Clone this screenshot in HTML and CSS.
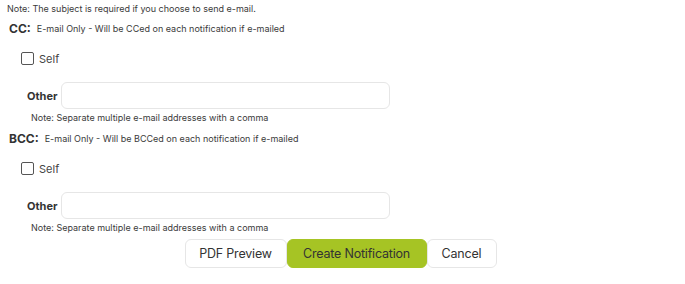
FILE: index.html
```html
<!DOCTYPE html>
<html lang="en">
<head>
    <meta charset="UTF-8">
    <meta name="viewport" content="width=device-width, initial-scale=1.0">
    <title>Notification Recipients</title>
    <link rel="stylesheet" href="styles.css">
</head>
<body>
    <div class="form">
        <div class="note-top">Note: The subject is required if you choose to send e-mail.</div>

        <div class="section-head">
            <span class="head-label">CC:</span>
            <span class="head-desc">E-mail Only - Will be CCed on each notification if e-mailed</span>
        </div>
        <label class="self-row">
            <span class="box"></span>
            <span>Self</span>
        </label>
        <div class="other-row">
            <span class="other-label">Other</span>
            <input class="other-input" type="text">
        </div>
        <div class="field-note">Note: Separate multiple e-mail addresses with a comma</div>

        <div class="section-head bcc">
            <span class="head-label">BCC:</span>
            <span class="head-desc">E-mail Only - Will be BCCed on each notification if e-mailed</span>
        </div>
        <label class="self-row">
            <span class="box"></span>
            <span>Self</span>
        </label>
        <div class="other-row">
            <span class="other-label">Other</span>
            <input class="other-input" type="text">
        </div>
        <div class="field-note">Note: Separate multiple e-mail addresses with a comma</div>

        <div class="actions">
            <button class="btn btn-preview">PDF Preview</button>
            <button class="btn btn-create">Create Notification</button>
            <button class="btn btn-cancel">Cancel</button>
        </div>
    </div>
</body>
</html>
```

FILE: styles.css
```css
* {
    margin: 0;
    padding: 0;
    box-sizing: border-box;
}

body {
    font-family: 'Inter', sans-serif;
    color: #333;
    background: #fff;
}

.form {
    padding-left: 7px;
    width: 685px;
}

.note-top {
    margin-top: 3px;
    font-size: 9px;
    line-height: 12px;
    color: #3a3a3a;
}

.section-head {
    display: flex;
    align-items: center;
    height: 16px;
    margin-top: 5px;
    padding-left: 2px;
}

.section-head.bcc {
    margin-top: 6px;
}

.head-label {
    font-size: 12px;
    font-weight: 700;
    margin-right: 6px;
    color: #333;
}

.head-desc {
    font-size: 9px;
    color: #3a3a3a;
}

.self-row {
    display: flex;
    align-items: center;
    height: 13px;
    margin-top: 16px;
    padding-left: 14px;
    gap: 5px;
    font-size: 11px;
    color: #444;
}

.box {
    width: 13px;
    height: 13px;
    border: 1px solid #555;
    border-radius: 2px;
    background: #fff;
}

.other-row {
    display: flex;
    align-items: center;
    margin-top: 17px;
    padding-left: 20px;
}

.other-label {
    width: 34px;
    font-size: 11px;
    font-weight: 700;
    color: #333;
}

.other-input {
    width: 329px;
    height: 27px;
    border: 1px solid #e6e6e6;
    border-radius: 6px;
    outline: none;
    background: #fff;
}

.field-note {
    margin-top: 3px;
    padding-left: 24px;
    font-size: 9px;
    line-height: 12px;
    color: #3a3a3a;
}

.actions {
    display: flex;
    justify-content: center;
    margin-top: 5px;
    padding-right: 11px;
}

.btn {
    height: 29px;
    border: 1px solid #e6e6e6;
    border-radius: 6px;
    background: #fff;
    font-family: 'Inter', sans-serif;
    font-size: 12.5px;
    color: #333;
    letter-spacing: -0.2px;
}

.btn-preview {
    width: 102px;
}

.btn-create {
    width: 140px;
    background: #a6c424;
    border-color: #a6c424;
}

.btn-cancel {
    width: 70px;
}
```
